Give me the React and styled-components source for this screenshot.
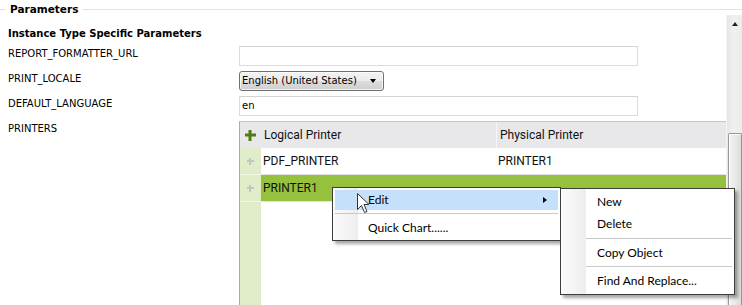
import React from 'react';
import styled, { createGlobalStyle } from 'styled-components';

const Global = createGlobalStyle`
  html, body { margin: 0; padding: 0; background: #fff; overflow: hidden; }
  body { width: 742px; height: 305px; font-family: "DejaVu Sans", sans-serif; color: #000; }
  #root { width: 742px; height: 305px; }
`;

const Page = styled.div`
  position: relative;
  width: 742px;
  height: 305px;
  overflow: hidden;
  background: #fff;
  display: flex;
  flex-direction: column;
`;

const Legend = styled.div`
  display: flex;
  height: 15px;
  flex-shrink: 0;
  &::before { content: ''; width: 5px; height: 1px; margin-top: 9px; background: #e2e2e2; }
  &::after { content: ''; flex: 1; height: 1px; margin-top: 9px; background: #e2e2e2; }
`;

const LegendText = styled.span`
  font: bold 10.5px/18px "DejaVu Sans", sans-serif;
  padding: 0 5px;
  height: 15px;
`;

const ScrollArea = styled.div`
  flex: 1;
  display: flex;
  min-height: 0;
`;

const Content = styled.div`
  flex: 1;
  display: flex;
  flex-direction: column;
  padding-left: 8px;
  min-width: 0;
`;

const Heading = styled.div`
  font: bold 10px/16px "DejaVu Sans", sans-serif;
  margin: 11px 0 4px;
`;

const Form = styled.div`
  flex: 1;
  display: grid;
  grid-template-columns: 231px 1fr;
  grid-template-rows: 20px 20px 20px 1fr;
  row-gap: 5px;
  min-height: 0;
`;

const Label = styled.div`
  font: 10px/14px "DejaVu Sans", sans-serif;
  padding-top: 1px;
`;

const TextInput = styled.div`
  width: 399px;
  height: 20px;
  box-sizing: border-box;
  border: 1px solid #dcdcdc;
  border-top-color: #d4d4d4;
  background: #fff;
  font: 10px/18px "DejaVu Sans", sans-serif;
  padding-left: 2px;
`;

const Select = styled.div`
  width: 145px;
  height: 20px;
  box-sizing: border-box;
  border: 1px solid #707070;
  border-radius: 3px;
  background: linear-gradient(#f3f3f3, #ebebeb 50%, #dddddd 51%, #cfcfcf);
  box-shadow: inset 0 0 0 1px rgba(255,255,255,0.7);
  display: flex;
  align-items: center;
  justify-content: space-between;
  padding: 0 7px 0 2px;
  font: 10px/18px "DejaVu Sans", sans-serif;
`;

const Caret = styled.span`
  width: 0;
  height: 0;
  border-left: 3.5px solid transparent;
  border-right: 3.5px solid transparent;
  border-top: 4px solid #000;
`;

const Table = styled.div`
  display: flex;
  flex-direction: column;
  border-left: 1px solid #ababab;
  border-top: 1px solid #c6c6c6;
  min-height: 0;
  font: 12px/26px Roboto, "Liberation Sans", sans-serif;
`;

const Row = styled.div`
  display: flex;
  height: ${p => p.$h || 26}px;
  flex: ${p => (p.$fill ? 1 : 'none')};
  background: ${p => (p.$header ? '#e8e8ea' : p.$selected ? '#95c13f' : '#fff')};
  border-bottom: ${p => (p.$header || p.$fill ? 'none' : '1px solid #e4e4e4')};
`;

const RowHead = styled.div`
  width: 20px;
  flex-shrink: 0;
  display: flex;
  align-items: center;
  justify-content: center;
  background: ${p => (p.$header ? '#e8e8ea' : '#e1ecc8')};
  box-shadow: ${p => (p.$header || p.$fill ? 'none' : '0 1px 0 #f2f5ea')};
  border-right: 1px solid ${p => (p.$header ? '#e8e8ea' : '#dfe9c6')};
`;

const Plus = styled.span`
  position: relative;
  width: ${p => (p.$big ? 11 : 7)}px;
  height: ${p => (p.$big ? 11 : 7)}px;
  &::before, &::after {
    content: '';
    position: absolute;
    background: ${p => (p.$big ? '#4e7d14' : '#c4c4c4')};
  }
  &::before { left: 0; right: 0; top: 50%; height: ${p => (p.$big ? 3 : 2)}px; transform: translateY(-50%); }
  &::after { top: 0; bottom: 0; left: 50%; width: ${p => (p.$big ? 3 : 2)}px; transform: translateX(-50%); }
`;

const Cell = styled.div`
  width: ${p => (p.$w ? `${p.$w}px` : 'auto')};
  flex: ${p => (p.$w ? 'none' : 1)};
  padding-left: ${p => p.$pl ?? 2}px;
  box-sizing: border-box;
  border-right: ${p => (p.$divider ? '1px solid #f7f7f7' : 'none')};
  white-space: nowrap;
  overflow: hidden;
  color: #111;
`;

const Scrollbar = styled.div`
  width: 15px;
  flex-shrink: 0;
  background: linear-gradient(90deg, #e6e6e6, #f0f0f0 40%, #ececec);
  border-left: 1px solid #f4f4f4;
  display: flex;
  flex-direction: column;
  align-items: center;
`;

const ArrowUp = styled.span`
  margin-top: 7px;
  width: 0;
  height: 0;
  border-left: 3.5px solid transparent;
  border-right: 3.5px solid transparent;
  border-bottom: 4px solid #222;
`;

const Thumb = styled.div`
  margin-top: 107px;
  width: 14px;
  flex: 1;
  box-sizing: border-box;
  border: 1px solid #979797;
  border-bottom: none;
  border-radius: 2px 2px 0 0;
  background: linear-gradient(90deg, #f3f3f3, #e9e9e9 50%, #dbdbdb);
  box-shadow: inset 1px 1px 0 #fff;
`;

const Menu = styled.div`
  position: absolute;
  left: ${p => p.$x}px;
  top: ${p => p.$y}px;
  width: ${p => p.$w}px;
  box-sizing: border-box;
  border: 1px solid #3d3d3d;
  padding: 2px;
  background: linear-gradient(90deg, #fbfbfb 0, #ededed ${p => p.$gutter}px, #fff ${p => p.$gutter}px);
  box-shadow: 3px 3px 3px rgba(0,0,0,0.35);
  font: 12px Lato, "Open Sans", sans-serif;
  color: #000;
`;

const Item = styled.div`
  height: ${p => p.$h}px;
  line-height: ${p => p.$h}px;
  padding-left: ${p => p.$pl}px;
  position: relative;
  background: ${p => (p.$active ? '#c5e0fb' : 'transparent')};
`;

const SubArrow = styled.span`
  position: absolute;
  right: 11px;
  top: 50%;
  transform: translateY(-50%);
  width: 0;
  height: 0;
  border-top: 3.5px solid transparent;
  border-bottom: 3.5px solid transparent;
  border-left: 4px solid #000;
`;

const Separator = styled.div`
  height: ${p => p.$h}px;
  margin-left: ${p => p.$ml}px;
  display: flex;
  align-items: center;
  &::after { content: ''; flex: 1; height: 1px; background: #c9c9c9; }
`;

const Cursor = styled.svg`
  position: absolute;
  left: 357px;
  top: 193px;
`;

export default function App() {
  return (
    <Page>
      <Global />
      <Legend><LegendText>Parameters</LegendText></Legend>
      <ScrollArea>
        <Content>
          <Heading>Instance Type Specific Parameters</Heading>
          <Form>
            <Label>REPORT_FORMATTER_URL</Label>
            <TextInput />
            <Label>PRINT_LOCALE</Label>
            <Select>English (United States)<Caret /></Select>
            <Label>DEFAULT_LANGUAGE</Label>
            <TextInput>en</TextInput>
            <Label>PRINTERS</Label>
            <Table>
              <Row $header>
                <RowHead $header><Plus $big /></RowHead>
                <Cell $w={236} $pl={3} $divider>Logical Printer</Cell>
                <Cell $pl={3}>Physical Printer</Cell>
              </Row>
              <Row>
                <RowHead><Plus /></RowHead>
                <Cell $w={236}>PDF_PRINTER</Cell>
                <Cell $pl={1}>PRINTER1</Cell>
              </Row>
              <Row $selected>
                <RowHead><Plus /></RowHead>
                <Cell $w={236}>PRINTER1</Cell>
                <Cell />
              </Row>
              <Row $fill>
                <RowHead $fill />
                <Cell />
              </Row>
            </Table>
          </Form>
        </Content>
        <Scrollbar>
          <ArrowUp />
          <Thumb />
        </Scrollbar>
      </ScrollArea>

      <Menu $x={332} $y={187} $w={229} $gutter={25}>
        <Item $h={20} $pl={33} $active>Edit<SubArrow /></Item>
        <Separator $h={7} $ml={0} />
        <Item $h={21} $pl={33}>Quick Chart......</Item>
      </Menu>

      <Menu $x={560} $y={188} $w={175} $gutter={25}>
        <Item $h={22} $pl={34}>New</Item>
        <Item $h={22} $pl={34}>Delete</Item>
        <Separator $h={7} $ml={23} />
        <Item $h={21} $pl={34}>Copy Object</Item>
        <Separator $h={7} $ml={23} />
        <Item $h={22} $pl={34}>Find And Replace...</Item>
      </Menu>

      <Cursor width="13" height="21" viewBox="0 0 13 21">
        <path d="M0.5 0.5 L0.5 16.5 L4.5 12.5 L7.5 19.5 L10 18.5 L7 11.5 L12 11.5 Z" fill="#fff" stroke="#333" strokeWidth="1" strokeLinejoin="round" />
      </Cursor>
    </Page>
  );
}
